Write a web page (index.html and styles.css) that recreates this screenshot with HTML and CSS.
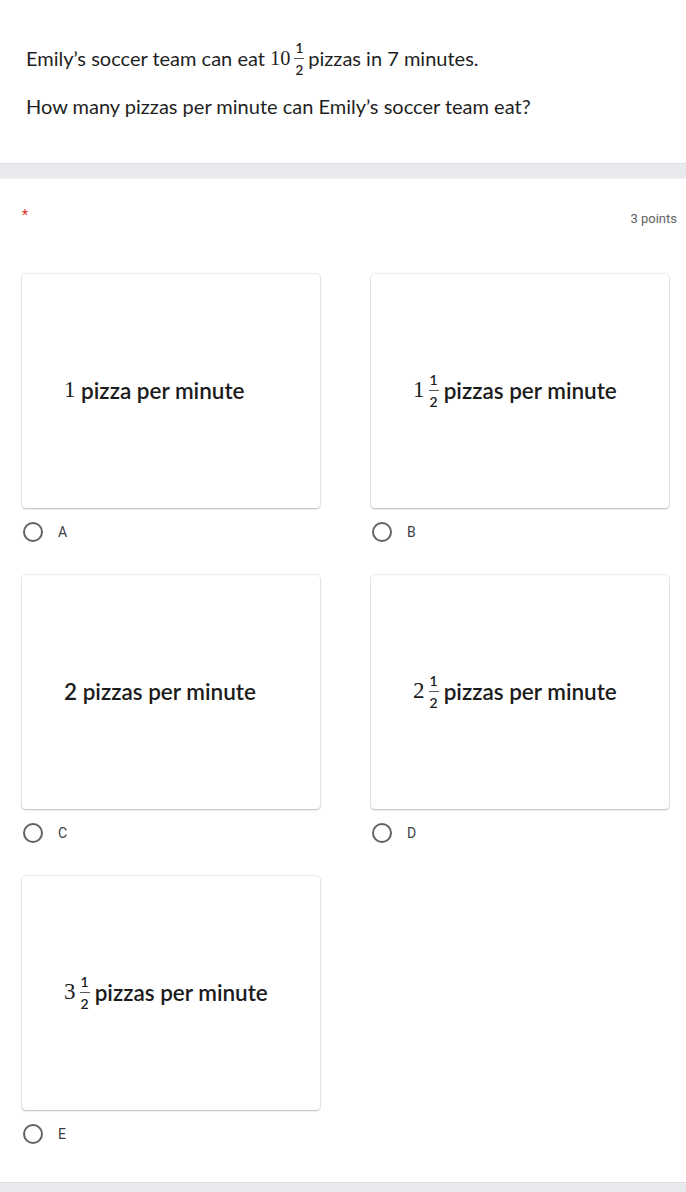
FILE: index.html
```html
<!DOCTYPE html>
<html>
<head>
<meta charset="utf-8">
<link rel="stylesheet" href="styles.css">
</head>
<body>
<div class="qcard">
  <p class="qline">Emily’s soccer team can eat <span class="num">10</span><span class="frac"><span class="fn">1</span><span class="fd">2</span></span>pizzas in 7 minutes.</p>
  <p class="qline second">How many pizzas per minute can Emily’s soccer team eat?</p>
</div>
<div class="band"></div>
<div class="acard">
  <div class="head">
    <span class="star">*</span>
    <span class="points">3 points</span>
  </div>
  <div class="grid">
    <div class="opt">
      <div class="box"><span class="ans"><span class="num">1</span> pizza per minute</span></div>
      <div class="radio-row"><span class="radio"></span><span class="lbl">A</span></div>
    </div>
    <div class="opt">
      <div class="box"><span class="ans"><span class="num">1</span><span class="frac"><span class="fn">1</span><span class="fd">2</span></span>pizzas per minute</span></div>
      <div class="radio-row"><span class="radio"></span><span class="lbl">B</span></div>
    </div>
    <div class="opt">
      <div class="box"><span class="ans">2 pizzas per minute</span></div>
      <div class="radio-row"><span class="radio"></span><span class="lbl">C</span></div>
    </div>
    <div class="opt">
      <div class="box"><span class="ans"><span class="num">2</span><span class="frac"><span class="fn">1</span><span class="fd">2</span></span>pizzas per minute</span></div>
      <div class="radio-row"><span class="radio"></span><span class="lbl">D</span></div>
    </div>
    <div class="opt">
      <div class="box"><span class="ans"><span class="num">3</span><span class="frac"><span class="fn">1</span><span class="fd">2</span></span>pizzas per minute</span></div>
      <div class="radio-row"><span class="radio"></span><span class="lbl">E</span></div>
    </div>
  </div>
</div>
<div class="band bottom"></div>
</body>
</html>
```
FILE: styles.css
```css
html, body {
  margin: 0;
  padding: 0;
  background: #ffffff;
}
body {
  font-family: Lato, "Open Sans", sans-serif;
  color: #202124;
  width: 686px;
}
.qcard {
  height: 163px;
  padding: 44px 0 0 26px;
  box-sizing: border-box;
}
.qline {
  margin: 0;
  font-size: 20px;
  line-height: 28px;
  height: 28px;
  color: #1f1f1f;
  display: flex;
  align-items: center;
  white-space: pre;
}
.qline.second {
  margin-top: 20px;
}
.num {
  font-family: "Liberation Serif", serif;
  font-size: 1.02em;
}
.frac {
  display: inline-flex;
  flex-direction: column;
  align-items: center;
  font-size: 13.5px;
  margin: -12px 4px -12px 4px;
  font-weight: 600;
}
.frac .fn {
  line-height: 20px;
  border-bottom: 1px solid #555;
  padding: 0 1px;
}
.frac .fd {
  line-height: 22px;
}
.qline .frac {
  position: relative;
  top: 1px;
}
.band {
  height: 14px;
  background: #e8eaed;
  border-top: 1px solid #dadce0;
  border-bottom: 1px solid #f1f3f4;
}
.band.bottom {
  height: 10px;
  border-bottom: none;
}
.acard {
  padding: 0 9px 0 22px;
  height: 1003px;
  box-sizing: border-box;
}
.head {
  display: flex;
  justify-content: space-between;
  align-items: flex-start;
  height: 95px;
  padding-top: 28px;
  box-sizing: border-box;
  font-family: Roboto, sans-serif;
}
.star {
  color: #d93025;
  font-size: 14px;
  line-height: 16px;
}
.points {
  font-size: 13px;
  color: #5f6368;
  line-height: 16px;
  margin-top: 4px;
}
.grid {
  display: grid;
  grid-template-columns: 298px 298px;
  column-gap: 51px;
  row-gap: 20px;
}
.opt {
  height: 281px;
}
.box {
  height: 234px;
  border-radius: 4px;
  background: #fff;
  box-shadow: 0 1px 2px rgba(60, 64, 67, 0.3), 0 0 0 1px rgba(60, 64, 67, 0.08);
  display: flex;
  align-items: center;
  padding-left: 42px;
  padding-bottom: 2px;
  box-sizing: border-box;
}
.ans {
  display: flex;
  align-items: center;
  font-size: 22.5px;
  font-weight: 600;
  color: #1c1c1c;
  white-space: pre;
}
.ans .num {
  font-weight: 400;
  font-size: 23px;
}
.ans .frac {
  font-size: 14px;
  margin-right: 5px;
  position: relative;
  top: 1px;
}
.ans .frac .fn {
  line-height: 20px;
}
.ans .frac .fd {
  line-height: 22px;
}
.radio-row {
  display: flex;
  align-items: center;
  height: 48px;
  font-family: Roboto, sans-serif;
}
.radio {
  width: 16px;
  height: 16px;
  border: 2px solid #5f6368;
  border-radius: 50%;
  margin-left: 1px;
}
.lbl {
  margin-left: 15px;
  font-size: 14px;
  font-weight: 400;
  color: #3c4043;
}
```
